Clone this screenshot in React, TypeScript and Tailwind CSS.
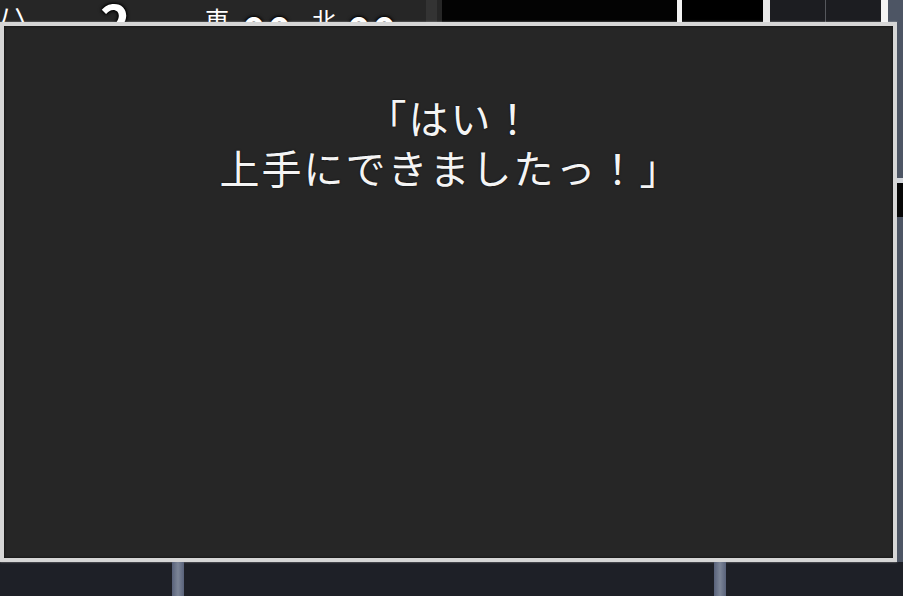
export default function App() {
  const cjk = "font-['Noto_Sans_CJK_JP','Noto_Sans_CJK_SC',sans-serif]";
  const outlined = "[text-shadow:0_0_2px_#000,0_0_3px_#000,0_0_4px_#000]";

  return (
    <div className="flex h-[596px] w-[903px] flex-col overflow-hidden bg-[#1e2027]">
      {/* status bar peeking over the message window */}
      <div className={`flex h-[22px] overflow-hidden ${cjk}`}>
        <div className="flex w-[442px] bg-[#262626] text-white">
          <span className="-ml-[8px] mt-[-2px] w-[40px] shrink-0 text-[40px] font-light leading-none">ハ</span>
          <span className={`ml-[68px] mt-[-6px] w-[30px] shrink-0 text-[52px] font-bold leading-none ${outlined}`}>2</span>
          <span className="ml-[75px] mt-[7px] w-[24px] shrink-0 text-[24px] leading-none">東</span>
          <span className={`ml-[13px] mt-[10px] w-[52px] shrink-0 text-[40px] font-bold leading-none tracking-[2px] ${outlined}`}>00</span>
          <span className="ml-[18px] mt-[8px] w-[24px] shrink-0 text-[24px] leading-none">北</span>
          <span className={`ml-[11px] mt-[10px] w-[52px] shrink-0 text-[40px] font-bold leading-none tracking-[2px] ${outlined}`}>00</span>
          <div className="ml-auto mr-[5px] w-[11px] shrink-0 bg-[#333333]" />
        </div>
        <div className="w-[235px] bg-[#030303]" />
        <div className="w-[5px] bg-[#f2f2f2]" />
        <div className="w-[81px] bg-black" />
        <div className="w-[7px] bg-[#e9e9e9]" />
        <div className="flex w-[111px] bg-[#1c1d21]">
          <div className="ml-[55px] w-px bg-[#55575c]" />
        </div>
        <div className="w-[7px] bg-[#f4f4f4]" />
        <div className="flex-1 bg-[#4d5564]" />
      </div>

      <div className="flex h-[540px]">
        {/* message window */}
        <div className="w-[897px] border-[4px] border-[#d6d6d6] bg-[#262626] shadow-[inset_0_0_3px_rgba(0,0,0,0.7),0_0_2px_rgba(255,255,255,0.5)]">
          <p
            className={`pt-[66px] pl-[4px] text-center text-[40px] leading-[50px] tracking-[2px] text-[#f4f4f4] [text-shadow:0_0_2px_rgba(0,0,0,0.8)] ${cjk}`}
          >
            「はい！
            <br />
            上手にできましたっ！」
          </p>
        </div>
        <div className="flex w-[6px] flex-col">
          <div className="h-[156px] bg-[#4d5564]" />
          <div className="h-[5px] bg-[#d3d6db]" />
          <div className="h-[34px] bg-[#070707]" />
          <div className="flex-1 bg-[#4d5564]" />
        </div>
      </div>

      {/* floor strip under the window */}
      <div className="flex flex-1">
        <div className="w-[172px]" />
        <div className="w-[12px] bg-gradient-to-r from-[#59627a] via-[#7c8597] to-[#59627a]" />
        <div className="w-[530px]" />
        <div className="w-[12px] bg-gradient-to-r from-[#59627a] via-[#7c8597] to-[#59627a]" />
      </div>
    </div>
  );
}
